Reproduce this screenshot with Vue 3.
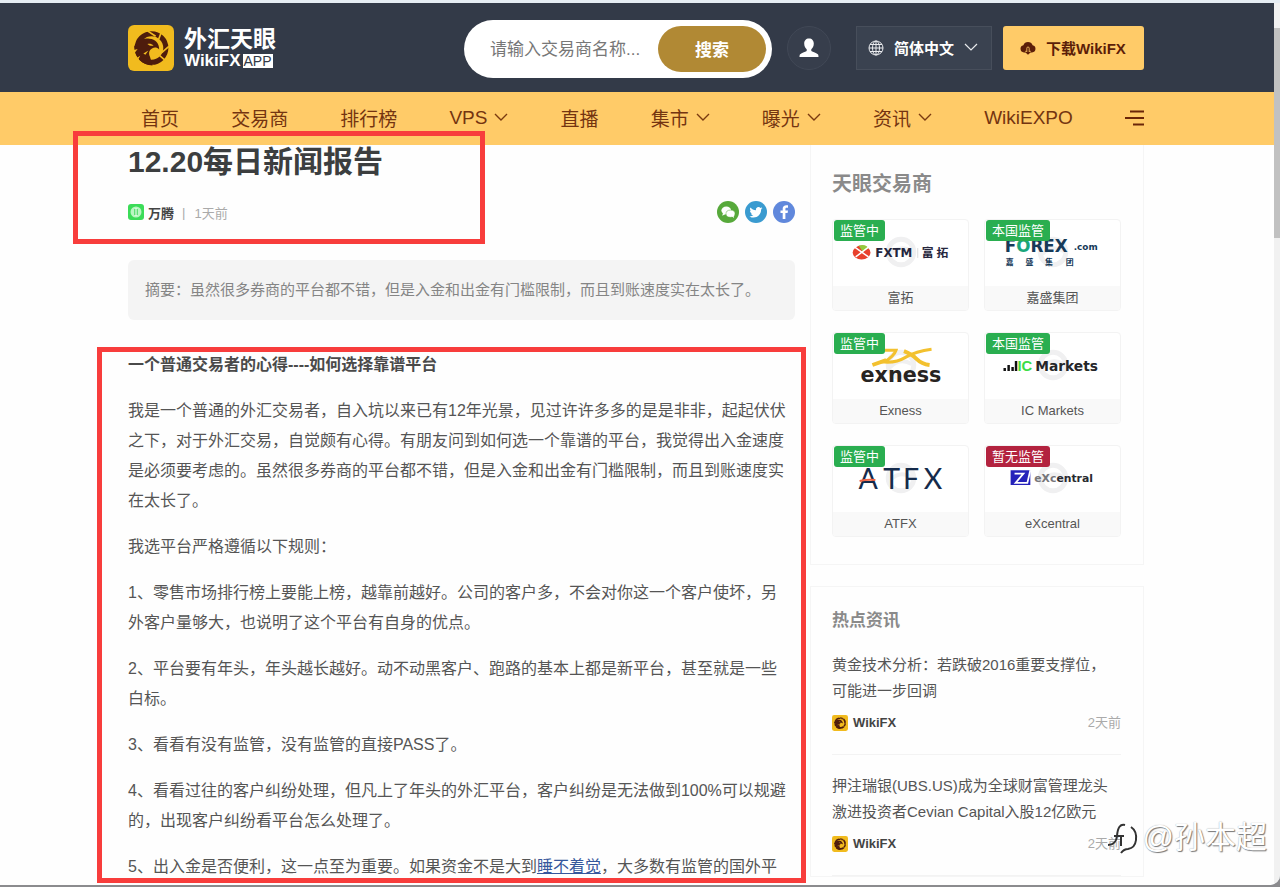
<script setup>
import { ref } from 'vue'

const keyword = ref('')

const navItems = [
  { label: '首页' },
  { label: '交易商' },
  { label: '排行榜' },
  { label: 'VPS', menu: true },
  { label: '直播' },
  { label: '集市', menu: true },
  { label: '曝光', menu: true },
  { label: '资讯', menu: true },
  { label: 'WikiEXPO' },
]

const paragraphs = [
  '我是一个普通的外汇交易者，自入坑以来已有12年光景，见过许许多多的是是非非，起起伏伏之下，对于外汇交易，自觉颇有心得。有朋友问到如何选一个靠谱的平台，我觉得出入金速度是必须要考虑的。虽然很多券商的平台都不错，但是入金和出金有门槛限制，而且到账速度实在太长了。',
  '我选平台严格遵循以下规则：',
  '1、零售市场排行榜上要能上榜，越靠前越好。公司的客户多，不会对你这一个客户使坏，另外客户量够大，也说明了这个平台有自身的优点。',
  '2、平台要有年头，年头越长越好。动不动黑客户、跑路的基本上都是新平台，甚至就是一些白标。',
  '3、看看有没有监管，没有监管的直接PASS了。',
  '4、看看过往的客户纠纷处理，但凡上了年头的外汇平台，客户纠纷是无法做到100%可以规避的，出现客户纠纷看平台怎么处理了。',
]

const brokers = [
  { id: 'fxtm', name: '富拓', badge: '监管中' },
  { id: 'forex', name: '嘉盛集团', badge: '本国监管' },
  { id: 'exness', name: 'Exness', badge: '监管中' },
  { id: 'icm', name: 'IC Markets', badge: '本国监管' },
  { id: 'atfx', name: 'ATFX', badge: '监管中' },
  { id: 'exc', name: 'eXcentral', badge: '暂无监管', warn: true },
]

const news = [
  { lines: ['黄金技术分析：若跌破2016重要支撑位，', '可能进一步回调'], time: '2天前' },
  { lines: ['押注瑞银(UBS.US)成为全球财富管理龙头', '激进投资者Cevian Capital入股12亿欧元'], time: '2天前' },
]
</script>

<template>
  <div class="window">
    <svg class="defs" aria-hidden="true">
      <symbol id="eagle" viewBox="0 0 45 45">
        <rect width="45" height="45" rx="6" fill="#f1bb1e" />
        <circle cx="23" cy="22.500" r="14" fill="none" stroke="#4e1c0c" stroke-width="5" />
        <path d="M18 5l9 6M33 6l-3 8M40 21l-7 6M37 35l-6-5" stroke="#f1bb1e" stroke-width="1.600" />
        <path d="M6 21l4-5c3-2.500 7-3 11-2.500 6 .5 9.500 4.500 9.500 10.500-2-2-4.500-2.500-7-1-3 1.800-3.500 4.500-2 8l2.500 8.500C14 39 7 33 6 21z" fill="#4e1c0c" />
        <path d="M19 18.500c2.500-.4 4.500.2 6 1.800-2.500.3-4.500-.2-6-1.800z" fill="#f1bb1e" />
        <path d="M4 25l5.500-1.500L5 29zM7 33l5-3-3 5.500zM15 28l5-3-3 4z" fill="#f1bb1e" />
      </symbol>
    </svg>

    <div class="page">
      <header class="top">
        <a class="logo" href="#" aria-label="WikiFX">
          <svg class="logo-mark" aria-hidden="true"><use href="#eagle" /></svg>
          <span class="logo-text">
            <span class="logo-cn">外汇天眼</span>
            <span class="logo-en">WikiFX<span class="logo-app">APP</span></span>
          </span>
        </a>
        <div class="tools">
          <form class="search" @submit.prevent>
            <input v-model="keyword" type="text" aria-label="搜索交易商" placeholder="请输入交易商名称..." />
            <button type="submit">搜索</button>
          </form>
          <button class="user" type="button" aria-label="用户">
            <svg viewBox="0 0 20 20" width="20" height="20"><path d="M10 .5c3 0 4.800 2.100 4.800 5 0 2.700-1.200 4.600-2.500 5.800v1.600c1.500 1 5.500 1.600 6.800 3.700.4.800.4 1.400.4 2.400H.500c0-1 0-1.600.4-2.400 1.300-2.100 5.300-2.700 6.800-3.700v-1.600C6.400 10.100 5.200 8.200 5.200 5.500c0-2.900 1.800-5 4.800-5z" fill="#fff" /></svg>
          </button>
          <button class="lang" type="button">
            <svg viewBox="0 0 16 16" width="16" height="16" fill="none" stroke="#e9ebee" stroke-width="1"><circle cx="8" cy="8" r="7" /><ellipse cx="8" cy="8" rx="3.500" ry="7" /><path d="M8 1v14M1 8h14M2 4.500h12M2 11.500h12" /></svg>
            <span>简体中文</span>
            <svg viewBox="0 0 14 9" width="14" height="9" fill="none" stroke="#e9ebee" stroke-width="1.200"><path d="M1 1l6 6 6-6" /></svg>
          </button>
          <a class="download" href="#">
            <svg viewBox="0 0 16 14" width="16" height="14"><path d="M4 11.500a3.700 3.700 0 0 1-.6-7.300A4.900 4.900 0 0 1 12.600 4.200 3.700 3.700 0 0 1 12 11.500h-1.500L8 13.800 5.500 11.500z" fill="#5c1e08" /><path d="M6.800 11V7.200a1.200 1.200 0 0 1 2.400 0V11M5.200 10.300h1.600M9.200 10.300h1.600" fill="none" stroke="#ffcb68" stroke-width=".8" /></svg>
            <span>下载WikiFX</span>
          </a>
        </div>
      </header>

      <nav class="nav">
        <a v-for="item in navItems" :key="item.label" href="#">
          {{ item.label }}
          <svg v-if="item.menu" viewBox="0 0 14 9" width="14" height="9" fill="none" stroke="#7a3a10" stroke-width="1.400"><path d="M1 1l6 6 6-6" /></svg>
        </a>
        <button type="button" aria-label="菜单">
          <svg viewBox="0 0 19 16" width="19" height="16" fill="none" stroke="#6b2608" stroke-width="1.800"><path d="M5 1.500h14M0 8h19M8 14.500h11" /></svg>
        </button>
      </nav>

      <div class="columns">
        <main>
          <div class="head">
            <h1>12.20每日新闻报告</h1>
            <div class="meta">
              <svg class="avatar" viewBox="0 0 16 16" aria-hidden="true"><rect width="16" height="16" rx="3" fill="#3bdc58" /><circle cx="8" cy="8" r="5.500" fill="#b9f6c2" /><path d="M6 5h4v6H6z" fill="#5fe077" /><path d="M8 4v8" stroke="#f3fff4" /></svg>
              <b>万腾</b><span class="bar">|</span><time>1天前</time>
              <span class="share">
                <a href="#" aria-label="微信"><svg viewBox="0 0 22 22"><circle cx="11" cy="11" r="11" fill="#57a93b" /><ellipse cx="9.300" cy="9.500" rx="4.900" ry="4" fill="#fff" /><path d="M6 12l-.8 2.700 3-1.500z" fill="#fff" /><ellipse cx="13.500" cy="12.700" rx="4.500" ry="3.600" fill="#fff" stroke="#57a93b" stroke-width=".5" /><path d="M15 15.500l2 1.500-.5-2.500z" fill="#fff" /></svg></a>
                <a href="#" aria-label="Twitter"><svg viewBox="0 0 22 22"><circle cx="11" cy="11" r="11" fill="#3a9bd0" /><path d="M17.500 7.200l-1.500.4c.6-.3.900-.8 1.100-1.300l-1.600.6a2.700 2.700 0 0 0-4.600 2.400C8.700 9.200 6.700 8.100 5.400 6.500c-.8 1.300-.3 2.800.8 3.600l-1.200-.3c0 1.300.9 2.400 2.100 2.600l-1.200.1c.3 1 1.300 1.800 2.500 1.800-1.100.9-2.500 1.200-4 1.100 5.600 3.300 11.800-.5 11.700-6.800z" fill="#fff" /></svg></a>
                <a href="#" aria-label="Facebook"><svg viewBox="0 0 22 22"><circle cx="11" cy="11" r="11" fill="#6088dc" /><path d="M12.400 18v-6h2.200l.4-2.500h-2.600V8c0-.8.400-1.300 1.400-1.300H15V4.300c-3.300-.6-5.300.6-5.300 3.300v1.900H7.500V12h2.200v6z" fill="#fff" /></svg></a>
              </span>
            </div>
            <span class="mark mark-head" aria-hidden="true"></span>
          </div>

          <p class="summary">摘要：虽然很多券商的平台都不错，但是入金和出金有门槛限制，而且到账速度实在太长了。</p>

          <article>
            <p><strong>一个普通交易者的心得----如何选择靠谱平台</strong></p>
            <p v-for="text in paragraphs" :key="text">{{ text }}</p>
            <p>5、出入金是否便利，这一点至为重要。如果资金不是大到<a href="#">睡不着觉</a>，大多数有监管的国外平</p>
            <span class="mark mark-body" aria-hidden="true"></span>
          </article>
        </main>

        <aside>
          <section class="panel brokers">
            <h2>天眼交易商</h2>
            <div class="cards">
              <a v-for="b in brokers" :key="b.id" class="card" href="#">
                <span class="badge" :class="{ warn: b.warn }">{{ b.badge }}</span>
                <svg class="art" viewBox="0 0 137 66" aria-hidden="true">
                  <circle cx="69" cy="32" r="13" fill="none" stroke="#f0f0f1" stroke-width="5" />
                  <path d="M58 34q10-10 22-3" fill="none" stroke="#f0f0f1" stroke-width="4" />
                  <g v-if="b.id === 'fxtm'">
                    <ellipse cx="29" cy="32.500" rx="9" ry="7" fill="#e8412c" />
                    <path d="M26 25.500q8-2 10 3l-6 3z" fill="#95c93d" />
                    <path d="M22 27l14 10M36 27l-13 10" stroke="#fff" stroke-width="1.500" />
                    <text class="wide" x="43" y="37" font-size="12" fill="#25263d">FXTM</text>
                    <path d="M86 28v10" stroke="#ddd" />
                    <text class="cn" x="90 105" y="37" font-size="12" fill="#25263d">富拓</text>
                  </g>
                  <g v-else-if="b.id === 'forex'">
                    <text class="wide" x="20" y="32" font-size="17" fill="#163a59">F<tspan fill="#1aa67c">O</tspan>REX</text>
                    <text class="wide" x="90" y="30" font-size="9" fill="#163a59">.com</text>
                    <text class="cn" x="21 41 61 82" y="45" font-size="8" fill="#163a59">嘉盛集团</text>
                  </g>
                  <g v-else-if="b.id === 'exness'">
                    <path d="M45 17h19q-2 6-12 12 12 1 22-5t26-8" fill="none" stroke="#f3c12f" stroke-width="3" />
                    <path d="M40 32l14-5M72 18q8 3 13 8t13 6" fill="none" stroke="#f3c12f" stroke-width="4" />
                    <text class="wide" x="28" y="49" font-size="21" fill="#272321">exness</text>
                  </g>
                  <g v-else-if="b.id === 'icm'">
                    <path d="M20 38v-3M24 38v-6M28 38v-4M31.500 38v-10" stroke="#111" stroke-width="2.500" />
                    <text class="sans" x="33" y="38" font-size="15" fill="#3cdd46">IC</text>
                    <text class="wide" x="51" y="38" font-size="14" fill="#252629">Markets</text>
                  </g>
                  <g v-else-if="b.id === 'atfx'">
                    <text class="thin" x="26 51 71 92" y="43" font-size="29" fill="#152b4b">ATFX</text>
                    <path d="M27 35q8-2 16-1" fill="none" stroke="#ed6546" stroke-width="2" />
                  </g>
                  <g v-else>
                    <path d="M26 24h20v15H26z" fill="#2522ba" />
                    <path d="M30 27.500h9L31 37h12L46 24" fill="none" stroke="#fff" stroke-width="1.800" />
                    <text class="wide" x="50" y="36" font-size="11" fill="#292a30"><tspan fill="#77777a">eXc</tspan>entral</text>
                  </g>
                </svg>
                <span class="name">{{ b.name }}</span>
              </a>
            </div>
          </section>

          <section class="panel hot">
            <h2>热点资讯</h2>
            <ul>
              <li v-for="n in news" :key="n.lines[0]">
                <a href="#"><span v-for="l in n.lines" :key="l">{{ l }}</span></a>
                <div class="by">
                  <svg aria-hidden="true"><use href="#eagle" /></svg>
                  <b>WikiFX</b><time>{{ n.time }}</time>
                </div>
              </li>
            </ul>
          </section>
        </aside>
      </div>
    </div>

    <div class="scrollbar" aria-hidden="true"><span></span></div>

    <div class="credit">
      <svg viewBox="0 0 32 36" width="32" height="36" fill="none" aria-hidden="true">
        <path d="M1 25q8 0 9-9Q11 3 18 5M7 16h10M14 16v10" stroke="#333" stroke-width="2" />
        <path d="M21 7q8 2 8 12 0 9-8 11-4 0-7 4" stroke="#fff" stroke-width="3" />
        <path d="M24 7q6 4 5 13-1 8-8 9-4 0-7 4" stroke="#333" stroke-width="2" />
      </svg>
      <span>@孙本超</span>
    </div>
  </div>
</template>

<style>
body {
  background: #8b8b8e;
}
</style>

<style scoped>
* {
  box-sizing: border-box;
}
.window {
  position: relative;
  display: flex;
  height: calc(100vh - 2px);
  overflow: hidden;
  padding-top: 3px;
  background: #e6edf3;
  border-bottom-right-radius: 10px;
  color: #555;
  font-family: "Liberation Sans", "Noto Sans CJK SC", sans-serif;
  font-size: 16px;
}
.defs {
  position: absolute;
  width: 0;
  height: 0;
}
a {
  color: inherit;
  text-decoration: none;
}
button {
  padding: 0;
  border: 0;
  background: none;
  font: inherit;
  cursor: pointer;
}
h1, h2, p, ul {
  margin: 0;
  padding: 0;
}
.page {
  flex: 1;
  min-width: 0;
  background: #fefefe;
}
.top {
  display: flex;
  align-items: center;
  justify-content: space-between;
  height: 89px;
  padding: 0 130px 0 128px;
  background: #333a48;
}
.logo {
  display: flex;
  align-items: center;
  gap: 10px;
  color: #fff;
  font-weight: 700;
}
.logo-mark {
  width: 46px;
  height: 46px;
}
.logo-text {
  display: flex;
  flex-direction: column;
}
.logo-cn {
  font-size: 23px;
  line-height: 26px;
}
.logo-en {
  display: flex;
  align-items: center;
  gap: 2px;
  font-size: 17px;
  line-height: 17px;
}
.logo-app {
  padding: 0 1px;
  background: #fff;
  color: #333a48;
  font-size: 14px;
  font-weight: 400;
  line-height: 14px;
}
.tools {
  display: flex;
  align-items: center;
}
.search {
  display: flex;
  align-items: center;
  width: 308px;
  height: 58px;
  margin-top: 2px;
  padding: 0 6px 0 26px;
  background: #fff;
  border-radius: 29px;
}
.search input {
  flex: 1;
  min-width: 0;
  padding: 2px 0 0;
  border: 0;
  outline: 0;
  background: none;
  color: #555;
  font: inherit;
  font-size: 17px;
}
.search input::placeholder {
  color: #777;
}
.search button {
  width: 108px;
  height: 46px;
  border-radius: 23px;
  background: #b18934;
  color: #fff;
  font-size: 17px;
  font-weight: 700;
}
.user {
  display: flex;
  align-items: center;
  justify-content: center;
  width: 44px;
  height: 44px;
  margin: 0 25px 0 15px;
  border: 1px solid #414856;
  border-radius: 50%;
  background: #373e4c;
}
.lang, .download {
  display: flex;
  align-items: center;
  height: 44px;
  font-size: 15px;
  font-weight: 700;
}
.lang {
  gap: 10px;
  width: 136px;
  margin-right: 11px;
  padding-left: 11px;
  border: 1px solid #474e5b;
  background: #3a4250;
  color: #fff;
}
.download {
  gap: 10px;
  width: 141px;
  padding-left: 17px;
  border-radius: 3px;
  background: #ffcb68;
  color: #5c1e08;
}
.nav {
  display: flex;
  align-items: center;
  justify-content: space-between;
  height: 53px;
  padding: 0 130px 2px 141px;
  background: #ffcb68;
  color: #743410;
  font-size: 19px;
}
.nav a {
  display: flex;
  align-items: center;
  gap: 7px;
}
.nav button {
  display: flex;
}
.columns {
  display: flex;
  gap: 15px;
  padding: 0 130px 0 128px;
}
main {
  flex: 1;
  min-width: 0;
}
.head, article {
  position: relative;
}
h1 {
  color: #3c3e3f;
  font-size: 30px;
  line-height: 34px;
}
.meta {
  display: flex;
  align-items: center;
  height: 22px;
  margin-top: 22px;
  color: #aaa;
  font-size: 13px;
}
.avatar {
  width: 16px;
  height: 16px;
  margin-right: 4px;
}
.meta b {
  color: #444;
}
.bar {
  margin: 0 9px 0 8px;
}
.share {
  display: flex;
  gap: 6px;
  margin-left: auto;
}
.share a, .share svg {
  display: block;
  width: 22px;
  height: 22px;
}
.summary {
  margin-top: 37px;
  padding: 15px 17px;
  border-radius: 6px;
  background: #f4f4f4;
  color: #858585;
  font-size: 15px;
  line-height: 30px;
}
article {
  display: flex;
  flex-direction: column;
  gap: 16px;
  margin-top: 30px;
  line-height: 30px;
}
article p {
  padding-right: 7px;
}
article strong {
  color: #4a4a4a;
}
article a {
  color: #36579c;
  text-decoration: underline;
}
.mark {
  position: absolute;
  border: 5px solid #f83d3c;
  pointer-events: none;
}
.mark-head {
  top: -14px;
  left: -55px;
  width: 412px;
  height: 113px;
}
.mark-body {
  inset: -3px -11px -1px -31px;
}
aside {
  flex: none;
  width: 334px;
}
.panel {
  padding: 0 22px 0 21px;
  border: 1px solid #f5f5f5;
}
.panel h2 {
  color: #8a8a8a;
}
.brokers {
  margin-bottom: 21px;
  padding-top: 25px;
  padding-bottom: 27px;
  border-top: 0;
}
.brokers h2 {
  margin-bottom: 21px;
  font-size: 20px;
  line-height: 28px;
}
.cards {
  display: grid;
  grid-template-columns: 1fr 1fr;
  gap: 21px 15px;
}
.card {
  position: relative;
  display: flex;
  flex-direction: column;
  overflow: hidden;
  border: 1px solid #f3f3f3;
  border-radius: 4px;
  background: #fff;
  font-size: 13px;
}
.badge {
  position: absolute;
  top: 0;
  left: 1px;
  padding: 0 6px;
  border-radius: 3px;
  background: #2aae50;
  color: #fff;
  line-height: 21px;
}
.badge.warn {
  background: #b3233f;
}
.art {
  width: 100%;
  height: 66px;
}
.name {
  background: #f9f9f9;
  line-height: 24px;
  text-align: center;
}
.wide {
  font-family: "DejaVu Sans", sans-serif;
  font-weight: 700;
}
.sans {
  font-family: "Liberation Sans", sans-serif;
  font-weight: 700;
}
.thin {
  font-family: Lato, sans-serif;
}
.cn {
  font-family: "Noto Sans CJK SC", sans-serif;
  font-weight: 700;
}
.hot {
  padding-top: 21px;
}
.hot h2 {
  font-size: 17px;
  line-height: 26px;
}
.hot ul {
  list-style: none;
}
.hot li {
  padding: 18px 0 22px;
  border-bottom: 1px solid #f3f3f3;
  font-size: 15px;
  line-height: 26px;
}
.hot li span {
  display: block;
  white-space: nowrap;
}
.by {
  display: flex;
  align-items: center;
  gap: 5px;
  height: 18px;
  margin-top: 10px;
  font-size: 13px;
}
.by svg {
  width: 16px;
  height: 16px;
}
.by b {
  color: #444;
}
.by time {
  margin-left: auto;
  color: #aaa;
}
.scrollbar {
  flex: none;
  width: 6px;
  padding-top: 25px;
  background: #f1f1f1;
}
.scrollbar span {
  display: block;
  height: 210px;
  background: #c1c1c1;
}
.credit {
  position: absolute;
  right: 13px;
  bottom: 25px;
  display: flex;
  align-items: center;
  gap: 4px;
  color: #fff;
  font-size: 31px;
  line-height: 44px;
  text-shadow: 1px 1px 1px #777, 0 0 1px #999;
}
</style>
